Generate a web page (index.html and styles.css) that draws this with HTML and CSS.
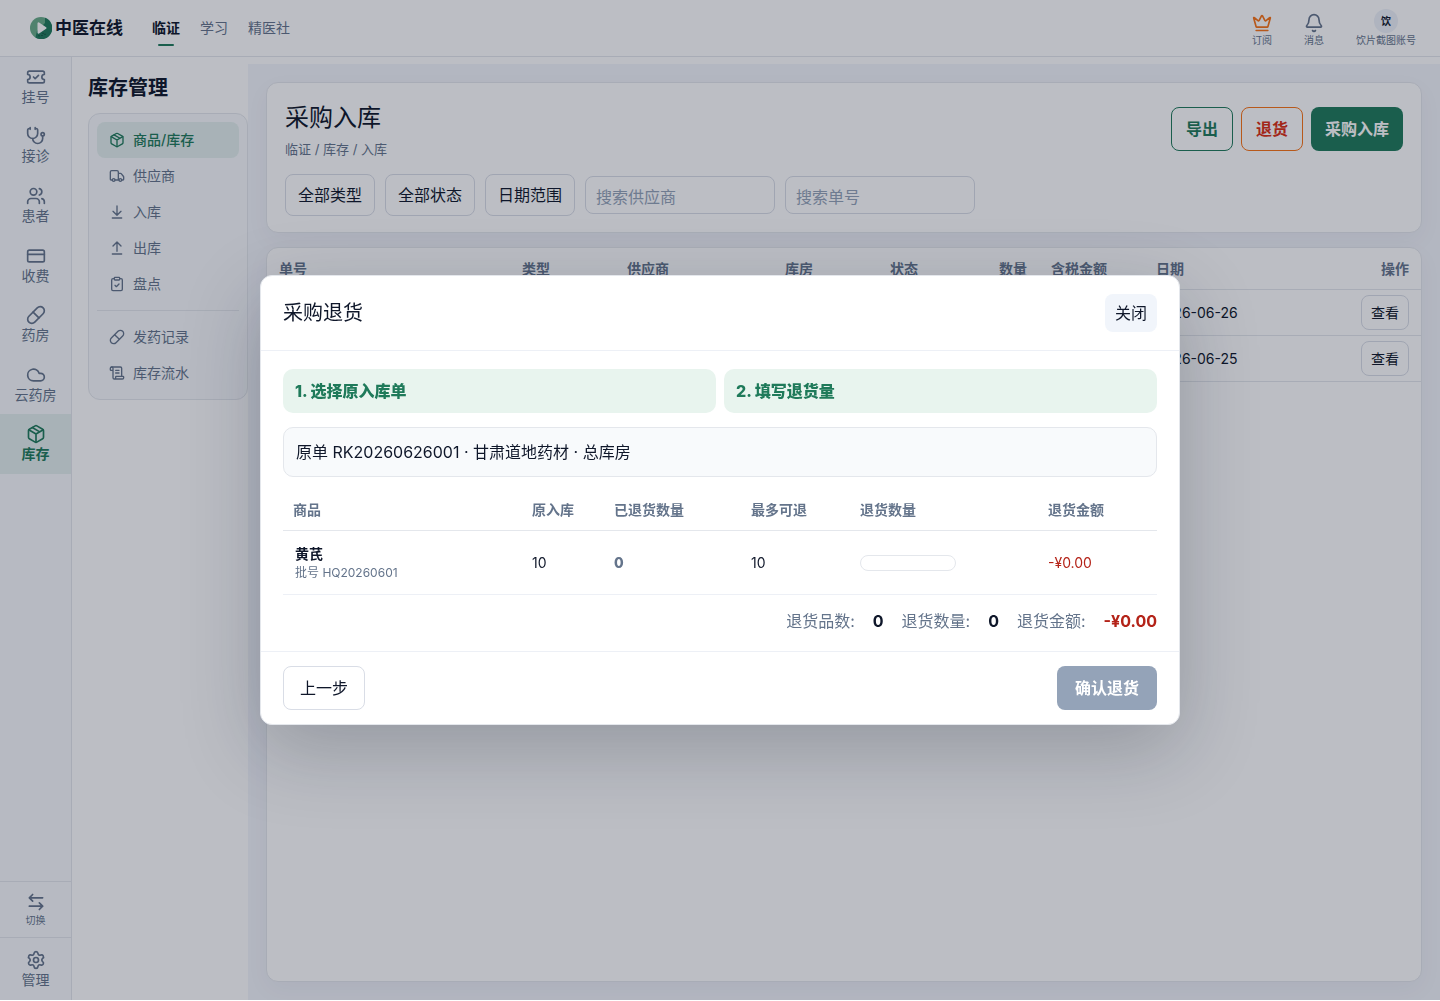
FILE: index.html
```html
<!DOCTYPE html>
<html lang="zh-CN">
<head>
<meta charset="utf-8">
<meta name="viewport" content="width=device-width, initial-scale=1">
<title>采购入库 - 中医在线</title>
<link rel="stylesheet" href="styles.css">
</head>
<body>
<svg class="sprite" aria-hidden="true">
  <symbol id="i-ticket" viewBox="0 0 24 24"><path d="M2 9a3 3 0 0 1 0 6v2a2 2 0 0 0 2 2h16a2 2 0 0 0 2-2v-2a3 3 0 0 1 0-6V7a2 2 0 0 0-2-2H4a2 2 0 0 0-2 2Z"/><path d="m9 12 2 2 4-4"/></symbol>
  <symbol id="i-stethoscope" viewBox="0 0 24 24"><path d="M11 2v2M5 2v2M5 3H4a2 2 0 0 0-2 2v4a6 6 0 0 0 12 0V5a2 2 0 0 0-2-2h-1"/><path d="M8 15a6 6 0 0 0 12 0v-3"/><circle cx="20" cy="10" r="2"/></symbol>
  <symbol id="i-users" viewBox="0 0 24 24"><path d="M16 21v-2a4 4 0 0 0-4-4H6a4 4 0 0 0-4 4v2M16 3.128a4 4 0 0 1 0 7.744M22 21v-2a4 4 0 0 0-3-3.87"/><circle cx="9" cy="7" r="4"/></symbol>
  <symbol id="i-card" viewBox="0 0 24 24"><rect x="2" y="5" width="20" height="14" rx="2"/><path d="M2 10h20"/></symbol>
  <symbol id="i-pill" viewBox="0 0 24 24"><path d="m10.5 20.5 10-10a4.95 4.95 0 1 0-7-7l-10 10a4.95 4.95 0 1 0 7 7Z"/><path d="m8.5 8.5 7 7"/></symbol>
  <symbol id="i-cloud" viewBox="0 0 24 24"><path d="M17.5 19H9a7 7 0 1 1 6.71-9h1.79a4.5 4.5 0 1 1 0 9Z"/></symbol>
  <symbol id="i-package" viewBox="0 0 24 24"><path d="M11 21.73a2 2 0 0 0 2 0l7-4A2 2 0 0 0 21 16V8a2 2 0 0 0-1-1.73l-7-4a2 2 0 0 0-2 0l-7 4A2 2 0 0 0 3 8v8a2 2 0 0 0 1 1.73z"/><path d="M12 22V12M3.29 7 12 12l8.71-5M7.5 4.27l9 5.15"/></symbol>
  <symbol id="i-truck" viewBox="0 0 24 24"><path d="M14 18V6a2 2 0 0 0-2-2H4a2 2 0 0 0-2 2v11a1 1 0 0 0 1 1h2M15 18H9M19 18h2a1 1 0 0 0 1-1v-3.65a1 1 0 0 0-.22-.624l-3.48-4.35A1 1 0 0 0 17.52 8H14"/><circle cx="17" cy="18" r="2"/><circle cx="7" cy="18" r="2"/></symbol>
  <symbol id="i-in" viewBox="0 0 24 24"><path d="M12 17V3M6 11l6 6 6-6M19 21H5"/></symbol>
  <symbol id="i-out" viewBox="0 0 24 24"><path d="m18 9-6-6-6 6M12 3v14M5 21h14"/></symbol>
  <symbol id="i-check" viewBox="0 0 24 24"><rect x="8" y="2" width="8" height="4" rx="1"/><path d="M16 4h2a2 2 0 0 1 2 2v14a2 2 0 0 1-2 2H6a2 2 0 0 1-2-2V6a2 2 0 0 1 2-2h2M9 14l2 2 4-4"/></symbol>
  <symbol id="i-scroll" viewBox="0 0 24 24"><path d="M15 12h-5M15 8h-5M19 17V5a2 2 0 0 0-2-2H4"/><path d="M8 21h12a2 2 0 0 0 2-2v-1a1 1 0 0 0-1-1H11a1 1 0 0 0-1 1v1a2 2 0 1 1-4 0V5a2 2 0 1 0-4 0v2a1 1 0 0 0 1 1h3"/></symbol>
  <symbol id="i-swap" viewBox="0 0 24 24"><path d="M8 3 4 7l4 4M4 7h16M16 21l4-4-4-4M20 17H4"/></symbol>
  <symbol id="i-gear" viewBox="0 0 24 24"><path d="M9.671 4.136a2.34 2.34 0 0 1 4.659 0 2.34 2.34 0 0 0 3.319 1.915 2.34 2.34 0 0 1 2.33 4.033 2.34 2.34 0 0 0 0 3.831 2.34 2.34 0 0 1-2.33 4.033 2.34 2.34 0 0 0-3.319 1.915 2.34 2.34 0 0 1-4.659 0 2.34 2.34 0 0 0-3.32-1.915 2.34 2.34 0 0 1-2.33-4.033 2.34 2.34 0 0 0 0-3.831A2.34 2.34 0 0 1 6.35 6.051a2.34 2.34 0 0 0 3.319-1.915"/><circle cx="12" cy="12" r="3"/></symbol>
  <symbol id="i-crown" viewBox="0 0 24 24"><path d="M11.562 3.266a.5.5 0 0 1 .876 0L15.39 8.87a1 1 0 0 0 1.516.294L21.183 5.5a.5.5 0 0 1 .798.519l-2.834 10.246a1 1 0 0 1-.956.734H5.81a1 1 0 0 1-.957-.734L2.02 6.02a.5.5 0 0 1 .798-.519l4.276 3.664a1 1 0 0 0 1.516-.294zM5 21h14"/></symbol>
  <symbol id="i-bell" viewBox="0 0 24 24"><path d="M10.268 21a2 2 0 0 0 3.464 0M3.262 15.326A1 1 0 0 0 4 17h16a1 1 0 0 0 .74-1.673C19.41 13.956 18 12.499 18 8A6 6 0 0 0 6 8c0 4.499-1.411 5.956-2.738 7.326"/></symbol>
</svg>

<div class="shell">
  <header class="topbar">
    <a class="brand" href="#">
      <svg class="brand-mark" viewBox="0 0 22 22" aria-hidden="true">
        <circle cx="11" cy="11" r="11" fill="#68ac88"/>
        <path d="M15 .8A11 11 0 1 1 5.500 20.500L7 14 15 6Z" fill="#1f7a5a"/>
        <path d="M7.500 6.300v9.400a1 1 0 0 0 1.600.8l7-4.700a1 1 0 0 0 0-1.600l-7-4.700a1 1 0 0 0-1.600.8Z" fill="#fff"/>
        <path d="M8.500 18.800h1M11.500 18.500h1M14.500 17.300h1M12.500 16.300h1" stroke="#0b3f31" stroke-width="1"/>
      </svg>
      <span>中医在线</span>
    </a>
    <nav class="topnav" aria-label="主导航">
      <a class="topnav-link is-active" href="#">临证</a>
      <a class="topnav-link" href="#">学习</a>
      <a class="topnav-link" href="#">精医社</a>
    </nav>
    <div class="tools">
      <button class="tool" type="button"><svg class="icon icon-lg crown"><use href="#i-crown"/></svg><span>订阅</span></button>
      <button class="tool" type="button"><svg class="icon icon-lg"><use href="#i-bell"/></svg><span>消息</span></button>
      <button class="tool" type="button"><span class="avatar">饮</span><span>饮片截图账号</span></button>
    </div>
  </header>

  <div class="workspace">
    <aside class="rail">
      <nav class="rail-nav" aria-label="模块">
        <a class="rail-link" href="#"><svg class="icon icon-lg"><use href="#i-ticket"/></svg>挂号</a>
        <a class="rail-link" href="#"><svg class="icon icon-lg"><use href="#i-stethoscope"/></svg>接诊</a>
        <a class="rail-link" href="#"><svg class="icon icon-lg"><use href="#i-users"/></svg>患者</a>
        <a class="rail-link" href="#"><svg class="icon icon-lg"><use href="#i-card"/></svg>收费</a>
        <a class="rail-link" href="#"><svg class="icon icon-lg"><use href="#i-pill"/></svg>药房</a>
        <a class="rail-link" href="#"><svg class="icon icon-lg"><use href="#i-cloud"/></svg>云药房</a>
        <a class="rail-link is-active" href="#"><svg class="icon icon-lg"><use href="#i-package"/></svg>库存</a>
      </nav>
      <button class="rail-switch" type="button"><svg class="icon icon-lg"><use href="#i-swap"/></svg>切换</button>
      <a class="rail-admin" href="#"><svg class="icon icon-lg"><use href="#i-gear"/></svg>管理</a>
    </aside>

    <aside class="subnav">
      <h2 class="subnav-title">库存管理</h2>
      <nav class="subnav-card" aria-label="库存管理">
        <a class="subnav-link is-active" href="#"><svg class="icon"><use href="#i-package"/></svg>商品/库存</a>
        <a class="subnav-link" href="#"><svg class="icon"><use href="#i-truck"/></svg>供应商</a>
        <a class="subnav-link" href="#"><svg class="icon"><use href="#i-in"/></svg>入库</a>
        <a class="subnav-link" href="#"><svg class="icon"><use href="#i-out"/></svg>出库</a>
        <a class="subnav-link" href="#"><svg class="icon"><use href="#i-check"/></svg>盘点</a>
        <hr class="subnav-rule">
        <a class="subnav-link" href="#"><svg class="icon"><use href="#i-pill"/></svg>发药记录</a>
        <a class="subnav-link" href="#"><svg class="icon"><use href="#i-scroll"/></svg>库存流水</a>
      </nav>
    </aside>

    <main class="main">
      <section class="panel panel-head">
        <div class="head-row">
          <div class="head-text">
            <h1 class="page-title">采购入库</h1>
            <p class="crumbs">临证 / 库存 / 入库</p>
          </div>
          <div class="actions">
            <button class="btn btn-outline" type="button">导出</button>
            <button class="btn btn-outline btn-return" type="button">退货</button>
            <button class="btn btn-primary" type="button">采购入库</button>
          </div>
        </div>
        <div class="filters">
          <button class="filter" type="button">全部类型</button>
          <button class="filter" type="button">全部状态</button>
          <button class="filter" type="button">日期范围</button>
          <input class="search" type="text" placeholder="搜索供应商" aria-label="搜索供应商">
          <input class="search" type="text" placeholder="搜索单号" aria-label="搜索单号">
        </div>
      </section>

      <section class="panel panel-list">
        <table class="orders">
          <colgroup><col class="o-no"><col class="o-mid"><col class="o-supplier"><col class="o-mid"><col class="o-mid"><col class="o-qty"><col class="o-mid"><col><col class="o-action"></colgroup>
          <thead>
            <tr><th>单号</th><th>类型</th><th>供应商</th><th>库房</th><th>状态</th><th class="num">数量</th><th>含税金额</th><th>日期</th><th class="num">操作</th></tr>
          </thead>
          <tbody>
            <tr><td></td><td></td><td></td><td></td><td></td><td></td><td></td><td>2026-06-26</td><td class="num"><button class="view" type="button">查看</button></td></tr>
            <tr><td></td><td></td><td></td><td></td><td></td><td></td><td></td><td>2026-06-25</td><td class="num"><button class="view" type="button">查看</button></td></tr>
          </tbody>
        </table>
      </section>
    </main>
  </div>
</div>

<div class="overlay">
  <div class="dialog" role="dialog" aria-modal="true" aria-labelledby="dialog-title">
    <header class="dialog-head">
      <h2 class="dialog-title" id="dialog-title">采购退货</h2>
      <button class="close" type="button">关闭</button>
    </header>
    <div class="dialog-body">
      <div class="steps">
        <div class="step">1. 选择原入库单</div>
        <div class="step">2. 填写退货量</div>
      </div>
      <div class="source">原单 RK20260626001 · 甘肃道地药材 · 总库房</div>
      <table class="returns">
        <colgroup><col><col class="r-in"><col class="r-done"><col class="r-max"><col class="r-qty"><col class="r-amount"></colgroup>
        <thead>
          <tr><th>商品</th><th>原入库</th><th>已退货数量</th><th>最多可退</th><th>退货数量</th><th>退货金额</th></tr>
        </thead>
        <tbody>
          <tr>
            <td><div class="item"><strong>黄芪</strong><small>批号 HQ20260601</small></div></td>
            <td>10</td>
            <td class="done">0</td>
            <td>10</td>
            <td><input class="qty" type="text" aria-label="退货数量"></td>
            <td class="amount">-¥0.00</td>
          </tr>
        </tbody>
      </table>
      <div class="totals">
        <span>退货品数:</span><strong>0</strong>
        <span>退货数量:</span><strong>0</strong>
        <span>退货金额:</span><strong class="amount">-¥0.00</strong>
      </div>
    </div>
    <footer class="dialog-foot">
      <button class="btn btn-back" type="button">上一步</button>
      <button class="btn btn-confirm" type="button" disabled>确认退货</button>
    </footer>
  </div>
</div>
</body>
</html>
```
FILE: styles.css
```css
:root {
  --ink: #0f172a;
  --muted: #64748b;
  --line: #e4e7ec;
  --line-soft: #edf0f6;
  --line-strong: #d9dde6;
  --green: #1f7a5a;
  --red: #b42318;
}

* { box-sizing: border-box; }

body {
  margin: 0;
  background: #fff;
  color: var(--ink);
  font: 16px/24px Inter, "Noto Sans CJK SC", sans-serif;
}

h1, h2, p { margin: 0; }
a { color: inherit; text-decoration: none; }
button, input { font: inherit; color: inherit; margin: 0; }
button { padding: 0; border: 0; background: none; cursor: pointer; white-space: nowrap; }

.sprite { position: absolute; width: 0; height: 0; }

.icon {
  width: 16px;
  height: 16px;
  flex: none;
  fill: none;
  stroke: currentColor;
  stroke-width: 2;
  stroke-linecap: round;
  stroke-linejoin: round;
}
.icon-lg { width: 20px; height: 20px; }

.shell {
  display: flex;
  flex-direction: column;
  min-height: calc(100vh - 1px);
}

/* top bar */
.topbar {
  display: flex;
  align-items: center;
  height: 57px;
  padding: 0 24px 0 30px;
  border-bottom: 1px solid var(--line);
}
.brand { display: flex; align-items: center; gap: 3px; font-size: 17px; font-weight: 700; }
.brand-mark { width: 22px; height: 22px; }
.topnav { display: flex; gap: 20px; margin-left: 29px; }
.topnav-link { position: relative; font-size: 14px; color: var(--muted); }
.topnav-link.is-active { color: var(--ink); font-weight: 700; }
.topnav-link.is-active::after {
  content: "";
  position: absolute;
  left: 6px;
  right: 6px;
  bottom: -6px;
  height: 2px;
  border-radius: 1px;
  background: var(--green);
}
.tools { display: flex; align-items: flex-end; gap: 32px; margin-left: auto; }
.tool {
  display: flex;
  flex-direction: column;
  align-items: center;
  color: var(--muted);
  font-size: 10px;
  line-height: 14px;
}
.crown { color: #f97316; }
.avatar {
  width: 24px;
  height: 24px;
  border-radius: 50%;
  background: #eef1f8;
  color: var(--ink);
  font-weight: 700;
  line-height: 24px;
}

/* workspace */
.workspace {
  flex: 1;
  display: grid;
  grid-template-columns: 72px 176px minmax(0, 1fr);
}

.rail {
  display: flex;
  flex-direction: column;
  border-right: 1px solid var(--line);
  background: #f8fafc;
  color: var(--muted);
  font-size: 14px;
  line-height: 20px;
  text-align: center;
}
.rail-nav { display: flex; flex-direction: column; height: 417px; margin-bottom: auto; }
.rail-link, .rail-admin, .rail-switch {
  display: flex;
  flex-direction: column;
  align-items: center;
  justify-content: center;
}
.rail-link { flex: 1; }
.rail-link.is-active { background: #e3efed; color: var(--green); font-weight: 700; }
.rail-switch {
  height: 56px;
  border-top: 1px solid var(--line);
  font-size: 10px;
  line-height: 16px;
}
.rail-admin { height: 63px; padding-top: 2px; border-top: 1px solid var(--line); }

.subnav { padding-left: 16px; }
.subnav-title { padding: 17px 0 11px; font-size: 20px; line-height: 28px; }
.subnav-card {
  padding: 8px;
  border: 1px solid var(--line);
  border-radius: 12px;
  background: #f8fafc;
}
.subnav-link {
  display: flex;
  align-items: center;
  gap: 8px;
  height: 36px;
  padding: 0 12px;
  border-radius: 8px;
  color: var(--muted);
  font-size: 14px;
}
.subnav-link.is-active { background: #e3efed; color: var(--green); font-weight: 500; }
.subnav-rule { margin: 8px 0; border: 0; border-top: 1px solid var(--line); }

.main {
  display: flex;
  flex-direction: column;
  gap: 14px;
  margin-top: 7px;
  padding: 18px;
  background: #f3f5fb;
}
.panel {
  border: 1px solid var(--line);
  border-radius: 12px;
  background: #fff;
  box-shadow: 0 8px 24px rgba(15, 23, 42, 0.04);
}
.panel-head { padding: 16px 18px; }
.head-row { display: flex; align-items: center; justify-content: space-between; }
.page-title { font-size: 24px; font-weight: 400; line-height: 38px; }
.crumbs { margin-top: 3px; color: var(--muted); font-size: 13px; line-height: 19px; }
.actions { display: flex; gap: 8px; }
.btn { height: 44px; border-radius: 8px; font-weight: 700; }
.btn-outline { padding: 0 14px; border: 1px solid var(--green); color: var(--green); }
.btn-return { border-color: #f97316; color: #dc2f12; }
.btn-primary { padding: 0 14px; background: var(--green); color: #fff; }
.filters { display: flex; align-items: center; gap: 10px; margin-top: 15px; }
.filter { height: 42px; padding: 0 12px; border: 1px solid var(--line-strong); border-radius: 8px; }
.search {
  width: 190px;
  height: 38px;
  padding: 4px 10px 0;
  border: 1px solid var(--line-strong);
  border-radius: 8px;
  background: transparent;
}
.search::placeholder { color: #94a3b8; }

.panel-list { flex: 1; }
table { width: 100%; border-collapse: separate; border-spacing: 0; table-layout: fixed; font-size: 14px; line-height: 20px; }
th, td { text-align: left; font-weight: 400; }
th { color: var(--muted); font-weight: 700; }
.orders th, .orders td { padding: 0 12px; border-bottom: 1px solid var(--line); }
.orders th { height: 42px; }
.orders td { height: 46px; }
.orders .num { text-align: right; }
.o-no { width: 243px; }
.o-mid { width: 105px; }
.o-supplier { width: 158px; }
.o-qty { width: 56px; }
.o-action { width: 90px; }
.view { height: 35px; padding: 0 9px; border: 1px solid var(--line-strong); border-radius: 8px; }

/* dialog */
.overlay {
  position: fixed;
  inset: 0 0 1px;
  display: grid;
  place-items: center;
  background: rgba(15, 23, 42, 0.28);
}
.dialog {
  width: min(920px, calc(100vw - 48px));
  border: 1px solid var(--line);
  border-radius: 12px;
  background: #fff;
  box-shadow: 0 24px 80px rgba(15, 23, 42, 0.24);
}
.dialog-head {
  display: flex;
  align-items: center;
  justify-content: space-between;
  padding: 18px 22px;
  border-bottom: 1px solid var(--line-soft);
}
.dialog-title { font-size: 20px; font-weight: 400; line-height: 30px; }
.close { height: 38px; padding: 0 10px; border-radius: 8px; background: #f1f5fb; }
.dialog-body { display: flex; flex-direction: column; gap: 14px; padding: 18px 22px; }
.steps { display: grid; grid-template-columns: 1fr 1fr; gap: 8px; }
.step { padding: 10px 12px; border-radius: 10px; background: #e8f4ee; color: var(--green); font-weight: 800; }
.source { padding: 12px; border: 1px solid var(--line); border-radius: 10px; background: #f8fafc; }
.returns th, .returns td { padding: 0 10px; border-bottom: 1px solid var(--line); }
.returns th { height: 40px; padding-bottom: 2px; }
.returns td { height: 64px; border-bottom-color: var(--line-soft); }
.r-in { width: 82px; }
.r-done { width: 137px; }
.r-max { width: 109px; }
.r-qty { width: 188px; }
.r-amount { width: 119px; }
.item { display: flex; flex-direction: column; padding: 0 2px; }
.item small { color: var(--muted); font-size: 12px; line-height: 18px; }
.returns .done { color: var(--muted); font-weight: 800; }
.qty {
  display: block;
  width: 96px;
  height: 16px;
  padding: 0 8px;
  border: 1px solid var(--line);
  border-radius: 8px;
  font-size: 12px;
  line-height: 14px;
}
.totals { display: flex; justify-content: flex-end; gap: 18px; color: var(--muted); }
.totals strong { color: var(--ink); }
.returns .amount, .totals .amount { color: var(--red); }
.dialog-foot {
  display: flex;
  justify-content: space-between;
  padding: 14px 22px;
  border-top: 1px solid var(--line-soft);
}
.btn-back { padding: 0 16px; border: 1px solid var(--line-strong); font-weight: 400; }
.btn-confirm { padding: 0 18px; background: #94a3b8; color: #fff; }
```
